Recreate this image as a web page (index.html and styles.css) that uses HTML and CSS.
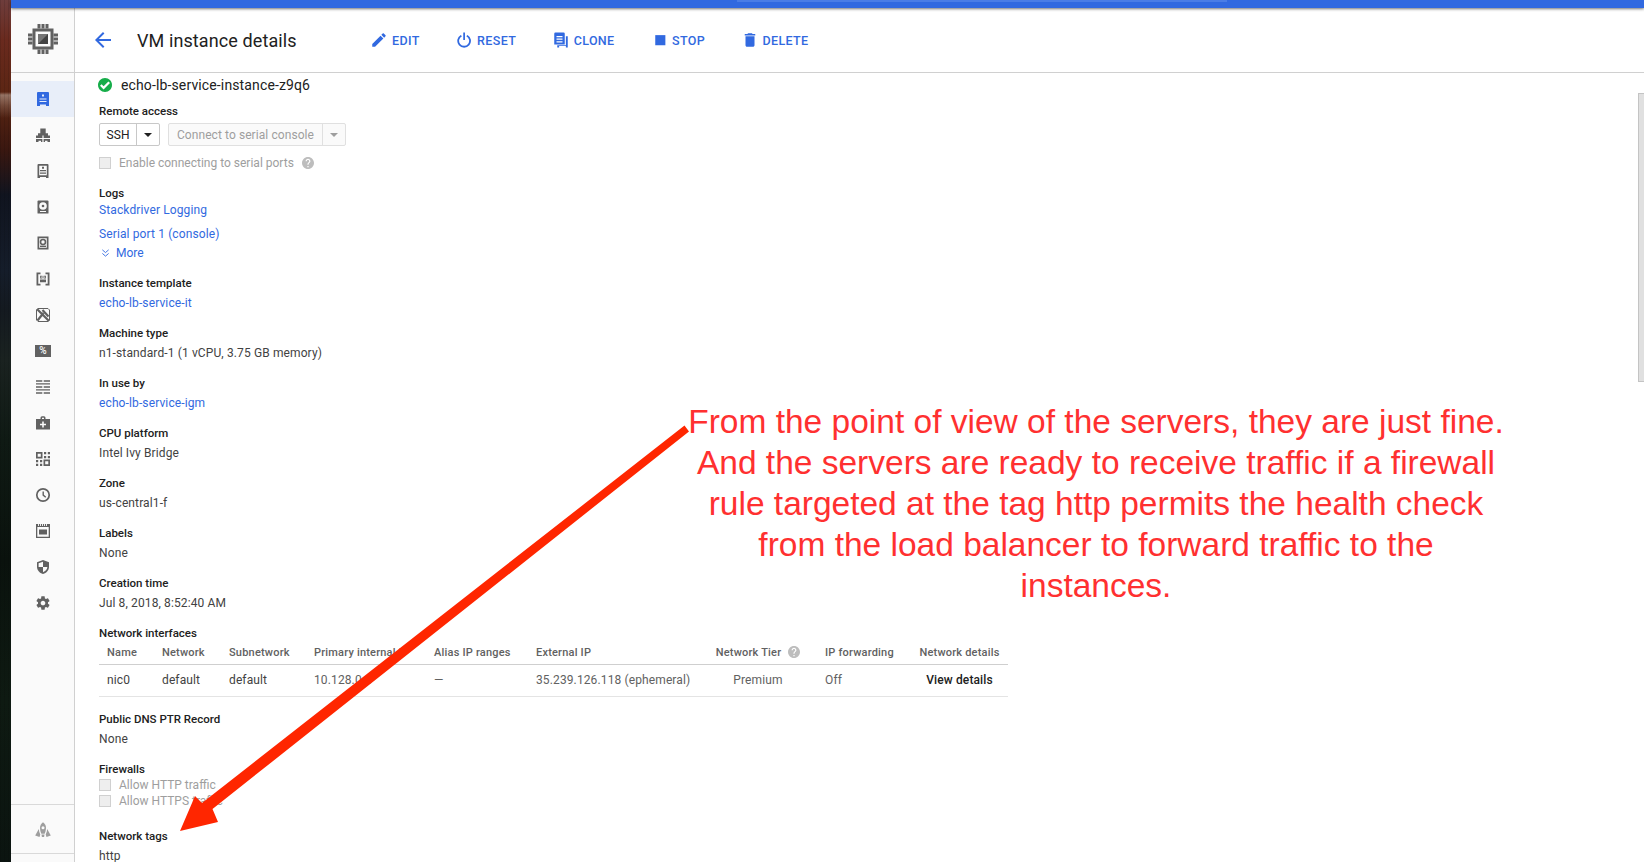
FILE: index.html
```html
<!DOCTYPE html>
<html lang="en">
<head>
<meta charset="utf-8">
<title>VM instance details</title>
<link rel="stylesheet" href="styles.css">
</head>
<body>
<div class="wallpaper"></div>
<div class="app">
  <div class="topbar"><div class="searchbox"></div></div>
  <div class="main">
    <aside class="sidebar">
      <div class="brand">
        <svg class="chip" viewBox="0 0 30 30"><path d="M6 6h18v18H6z" fill="none" stroke="#616161" stroke-width="3"/><path d="M10 10h10v10H10z" fill="#757575"/><path d="M20 10v10H10z" fill="#424242"/><path d="M9.500 0h3v4.500h-3zM13.500 0h3v4.500h-3zM17.500 0h3v4.500h-3zM9.500 25.500h3V30h-3zM13.500 25.500h3V30h-3zM17.500 25.500h3V30h-3zM0 9.500h4.500v3H0zM0 13.500h4.500v3H0zM0 17.500h4.500v3H0zM25.500 9.500H30v3h-4.500zM25.500 13.500H30v3h-4.500zM25.500 17.500H30v3h-4.500z" fill="#616161"/></svg>
      </div>
      <nav class="nav">
        <div class="nav-item active"><svg class="ico" viewBox="0 0 16 16"><path d="M3 1h10a1 1 0 0 1 1 1v13h-3v-1.500H5V15H2V2a1 1 0 0 1 1-1z" fill="#3169e0"/><path d="M7 3.500h2v2H7zM4.500 7.500h7v1h-7zM4.500 10h7v1h-7z" fill="#e8eef9"/></svg></div>
        <div class="nav-item"><svg class="ico" viewBox="0 0 16 16"><path d="M5.300 1.500h5.400v4.700h2.300v2.300h2V15h-2.500v-1.300H10V15H6v-1.300H3.500V15H1V8.500h2V6.200h2.300z" fill="#616161"/><path d="M7.400 8.500h1.200V15H7.400zM1 11h14v.9H1z" fill="#fafafa"/></svg></div>
        <div class="nav-item"><svg class="ico" viewBox="0 0 16 16"><path d="M3.500 1h9a1 1 0 0 1 1 1v13H11v-1H5v1H2.500V2a1 1 0 0 1 1-1zM4.200 2.700v9.600h7.600V2.700z" fill="#616161" fill-rule="evenodd"/><path d="M7 3.700h2v2H7zM5 7h6v1.300H5zM5 9.500h6v1.300H5z" fill="#616161"/></svg></div>
        <div class="nav-item"><svg class="ico" viewBox="0 0 16 16"><path d="M3.500 1.500h9a1 1 0 0 1 1 1V14a.500.500 0 0 1-.5.500H3a.500.500 0 0 1-.5-.500V2.500a1 1 0 0 1 1-1z" fill="#616161"/><circle cx="8" cy="7" r="3.800" fill="#fafafa"/><circle cx="8" cy="7" r="1.300" fill="#616161"/><path d="M5 12h6v1H5z" fill="#fafafa"/></svg></div>
        <div class="nav-item"><svg class="ico" viewBox="0 0 16 16"><path d="M2.500 1.500h11v13h-11zM4.200 3.200v9.600h7.600V3.200z" fill="#616161" fill-rule="evenodd"/><circle cx="8" cy="7" r="2.500" fill="none" stroke="#616161" stroke-width="1.600"/><path d="M5 10.600h6V12H5z" fill="#616161"/></svg></div>
        <div class="nav-item"><svg class="ico" viewBox="0 0 16 16"><path d="M1.500 1.500h4v1.800H3.300v9.400h2.200v1.800h-4zM14.500 1.500h-4v1.800h2.200v9.400h-2.200v1.800h4z" fill="#616161"/><path d="M5 4.800h2.500v2.700H5zM8.500 4.800H11v2.700H8.500zM5 8.500h6v2.700H5z" fill="#616161"/><path d="M5.800 5.600h.9v1.100h-.9zM9.300 5.600h.9v1.100h-.9z" fill="#fafafa"/></svg></div>
        <div class="nav-item"><svg class="ico" viewBox="0 0 16 16"><path d="M3 1.500h10L14.500 3v10L13 14.500H3L1.500 13V3z" fill="none" stroke="#616161" stroke-width="1"/><path d="M2 2l12 12M2.500 13.500L8.500 6M13.500 9.500L7.500 3" fill="none" stroke="#616161" stroke-width="2.200"/></svg></div>
        <div class="nav-item"><svg class="ico" viewBox="0 0 16 16"><path d="M0 2h16v12H0z" fill="#616161"/><text x="8" y="11.300" class="pct-text">%</text></svg></div>
        <div class="nav-item"><svg class="ico" viewBox="0 0 16 16"><path d="M1 1.200h6.300v1.600H1zM8.700 1.200H15v1.600H8.700zM1 7.200h6.300v1.600H1zM8.700 7.200H15v1.600H8.700zM1 13.200h6.300v1.600H1zM8.700 13.200H15v1.600H8.700z" fill="#616161"/><path d="M1 4.200h14v1.400H1zM1 10.200h14v1.400H1z" fill="#616161"/></svg></div>
        <div class="nav-item"><svg class="ico" viewBox="0 0 16 16"><path d="M5.500 4V2.800a1.500 1.500 0 0 1 1.500-1.500h2a1.500 1.500 0 0 1 1.500 1.500V4H15v10.500H1V4zM7 2.800V4h2V2.800z" fill="#616161" fill-rule="evenodd"/><path d="M7.200 6.500h1.600v2.200H11v1.600H8.800v2.200H7.200v-2.200H5v-1.600h2.200z" fill="#fafafa"/></svg></div>
        <div class="nav-item"><svg class="ico" viewBox="0 0 16 16"><path d="M1 1h6.500v6.500H1zM2.700 2.700v3.100h3.100V2.700zM8.500 8.500H15V15H8.500zM10.200 10.200v3.100h3.100v-3.100z" fill="#616161" fill-rule="evenodd"/><path d="M9 1h2.200v2.200H9zM12.800 1H15v2.200h-2.200zM12.800 5H15v2.200h-2.200zM9 5h2.200v2.200H9zM1 9h2.200v2.200H1zM5 9h2.200v2.200H5zM1 12.800h2.200V15H1zM5 12.800h2.200V15H5z" fill="#616161"/></svg></div>
        <div class="nav-item"><svg class="ico" viewBox="0 0 16 16"><circle cx="8" cy="8" r="6.200" fill="none" stroke="#616161" stroke-width="1.700"/><path d="M7.500 4.500h1.400v3.300l2.300 2-.9 1L7.500 8.500z" fill="#616161"/></svg></div>
        <div class="nav-item"><svg class="ico" viewBox="0 0 16 16"><path d="M1 1h14v14H1zM2.300 4v9.700h11.400V4z" fill="#616161" fill-rule="evenodd"/><path d="M4 6.500h8v5H4z" fill="#616161"/><path d="M3.500 1v2M5.500 1v2M7.500 1v2M9.500 1v2M11.500 1v2" stroke="#fafafa" stroke-width=".9"/></svg></div>
        <div class="nav-item"><svg class="ico" viewBox="0 0 16 16"><path d="M8 1l6 2.200v4.500c0 3.500-2.500 6.200-6 7.300-3.500-1.100-6-3.800-6-7.300V3.200z" fill="#616161"/><path d="M8 2.800V8H3.600V4.300zM8 8h4.400c-.3 2.400-2 4.300-4.400 5.200z" fill="#fafafa"/></svg></div>
        <div class="nav-item"><svg class="ico" viewBox="0 0 24 24"><path d="M19.430 12.980c.04-.32.07-.64.07-.98s-.03-.66-.07-.98l2.110-1.650c.19-.15.24-.42.12-.64l-2-3.460c-.12-.22-.39-.3-.61-.22l-2.490 1c-.52-.4-1.080-.73-1.690-.98l-.38-2.650C14.460 2.180 14.250 2 14 2h-4c-.25 0-.46.18-.49.42l-.38 2.650c-.61.25-1.170.59-1.690.98l-2.490-1c-.23-.09-.49 0-.61.22l-2 3.460c-.13.22-.07.49.12.64l2.110 1.650c-.04.32-.07.65-.07.98s.03.66.07.98l-2.110 1.650c-.19.15-.24.42-.12.64l2 3.460c.12.22.39.3.61.22l2.490-1c.52.4 1.080.73 1.690.98l.38 2.650c.03.24.24.42.49.42h4c.25 0 .46-.18.49-.42l.38-2.650c.61-.25 1.170-.59 1.690-.98l2.490 1c.23.09.49 0 .61-.22l2-3.460c.12-.22.07-.49-.12-.64l-2.110-1.650zM12 15.500c-1.930 0-3.500-1.570-3.500-3.500s1.570-3.500 3.500-3.500 3.500 1.570 3.500 3.500-1.570 3.500-3.500 3.500z" fill="#616161"/></svg></div>
      </nav>
      <div class="side-foot"><svg class="ico" viewBox="0 0 16 16"><path d="M8 .3c2 1.400 3 3.500 3 5.800 0 2-.5 3.900-1.300 5.700H6.300C5.500 10 5 8.100 5 6.100 5 3.800 6 1.700 8 .3z" fill="#9e9e9e"/><circle cx="8" cy="5.800" r="1.500" fill="#fafafa"/><path d="M3.800 7c.1 2 .6 3.800 1.500 5.400L4.500 15 .2 13.500zM12.200 7c-.1 2-.6 3.800-1.500 5.400l.8 2.600 4.300-1.500zM6.500 12.500h3l-.4 2.500H6.900z" fill="#9e9e9e"/></svg></div>
    </aside>
    <section class="content">
      <header class="header">
        <svg class="back" viewBox="0 0 24 24"><path d="M20 11H7.830l5.590-5.590L12 4l-8 8 8 8 1.410-1.410L7.830 13H20v-2z"/></svg>
        <h1 class="title">VM instance details</h1>
        <div class="actions">
          <span class="action"><svg viewBox="0 0 24 24"><path d="M3 17.250V21h3.750L17.810 9.940l-3.750-3.750L3 17.250zM20.710 7.040c.39-.39.39-1.020 0-1.410l-2.340-2.340c-.39-.39-1.020-.39-1.410 0l-1.830 1.830 3.750 3.750 1.830-1.830z"/></svg>EDIT</span>
          <span class="action"><svg viewBox="0 0 24 24"><path d="M11 2h2.300v10H11zM7.700 5.200l1.500 1.900a6.700 6.700 0 1 0 5.900 0l1.500-1.900a9.100 9.100 0 1 1-8.900 0z"/></svg>RESET</span>
          <span class="action"><svg viewBox="0 0 24 24"><path d="M4.500 2h11A1.500 1.500 0 0 1 17 3.500V18H3V3.500A1.500 1.500 0 0 1 4.500 2zM6 6.500v1.700h8V6.500zM6 10v1.700h8V10zM6 13.500v1.700h8v-1.700z" fill-rule="evenodd"/><path d="M18.500 7H21v15h-2.500v-2h-9v2H7v-3h11.500z"/></svg>CLONE</span>
          <span class="action"><svg viewBox="0 0 24 24"><path d="M7 5.500h13.500V19H7z"/></svg>STOP</span>
          <span class="action"><svg viewBox="0 0 24 24"><path d="M6 19c0 1.100.9 2 2 2h8c1.100 0 2-.9 2-2V7H6v12zM19 4h-3.500l-1-1h-5l-1 1H5v2h14V4z"/></svg>DELETE</span>
        </div>
      </header>
      <div class="body">
        <div class="name-row">
          <svg class="ok" viewBox="2 2 20 20"><path d="M12 2C6.480 2 2 6.480 2 12s4.480 10 10 10 10-4.480 10-10S17.520 2 12 2z" fill="#16ad4a"/><path d="M6 12l4 4 8-8" fill="none" stroke="#fff" stroke-width="3.200"/></svg>
          <span>echo-lb-service-instance-z9q6</span>
        </div>
        <div class="label">Remote access</div>
        <div class="remote">
          <div class="split"><span class="split-main ssh">SSH</span><span class="split-caret"><i class="caret"></i></span></div>
          <div class="split disabled"><span class="split-main serial">Connect to serial console</span><span class="split-caret"><i class="caret"></i></span></div>
        </div>
        <div class="check-row enable"><i class="box"></i><span>Enable connecting to serial ports</span><svg class="help" viewBox="2 2 20 20"><path d="M12 2C6.480 2 2 6.480 2 12s4.480 10 10 10 10-4.480 10-10S17.520 2 12 2zm1 17h-2v-2h2v2zm2.070-7.750l-.9.920C13.450 12.900 13 13.500 13 15h-2v-.5c0-1.100.45-2.100 1.170-2.830l1.240-1.260c.37-.36.59-.86.59-1.410 0-1.100-.9-2-2-2s-2 .9-2 2H8c0-2.210 1.790-4 4-4s4 1.790 4 4c0 .88-.36 1.680-.93 2.250z"/></svg></div>
        <div class="section logs">
          <div class="label">Logs</div>
          <a class="value link tight">Stackdriver Logging</a>
          <a class="value link serial-link">Serial port 1 (console)</a>
          <a class="value link more"><svg class="chev" viewBox="0 0 10 10"><path d="M1.500 1.500L5 4.500l3.500-3M1.500 5.500L5 8.500l3.500-3" fill="none" stroke="#3169e0" stroke-width="1"/></svg>More</a>
        </div>
        <div class="section"><div class="label">Instance template</div><a class="value link">echo-lb-service-it</a></div>
        <div class="section"><div class="label">Machine type</div><div class="value">n1-standard-1 (1 vCPU, 3.75 GB memory)</div></div>
        <div class="section"><div class="label">In use by</div><a class="value link">echo-lb-service-igm</a></div>
        <div class="section"><div class="label">CPU platform</div><div class="value">Intel Ivy Bridge</div></div>
        <div class="section"><div class="label">Zone</div><div class="value">us-central1-f</div></div>
        <div class="section"><div class="label">Labels</div><div class="value">None</div></div>
        <div class="section"><div class="label">Creation time</div><div class="value">Jul 8, 2018, 8:52:40 AM</div></div>
        <div class="label">Network interfaces</div>
        <table class="nics">
          <colgroup><col class="c1"><col class="c2"><col class="c3"><col class="c4"><col class="c5"><col class="c6"><col class="c7"><col class="c8"><col class="c9"></colgroup>
          <thead><tr><th>Name</th><th>Network</th><th>Subnetwork</th><th>Primary internal IP</th><th>Alias IP ranges</th><th>External IP</th><th class="center">Network Tier<svg class="help small" viewBox="2 2 20 20"><path d="M12 2C6.480 2 2 6.480 2 12s4.480 10 10 10 10-4.480 10-10S17.520 2 12 2zm1 17h-2v-2h2v2zm2.070-7.750l-.9.920C13.450 12.900 13 13.500 13 15h-2v-.5c0-1.100.45-2.100 1.170-2.830l1.240-1.260c.37-.36.59-.86.59-1.410 0-1.100-.9-2-2-2s-2 .9-2 2H8c0-2.210 1.790-4 4-4s4 1.790 4 4c0 .88-.36 1.680-.93 2.250z"/></svg></th><th class="fwd">IP forwarding</th><th class="center">Network details</th></tr></thead>
          <tbody><tr><td class="dark">nic0</td><td class="dark">default</td><td class="dark">default</td><td>10.128.0.5</td><td>—</td><td>35.239.126.118 (ephemeral)</td><td class="center">Premium</td><td class="fwd">Off</td><td class="center view">View details</td></tr></tbody>
        </table>
        <div class="section"><div class="label">Public DNS PTR Record</div><div class="value">None</div></div>
        <div class="section firewalls">
          <div class="label">Firewalls</div>
          <div class="check-row small-row"><i class="box"></i><span>Allow HTTP traffic</span></div>
          <div class="check-row small-row"><i class="box"></i><span>Allow HTTPS traffic</span></div>
        </div>
        <div class="section"><div class="label">Network tags</div><div class="value">http</div></div>
      </div>
      <div class="scrollbar"></div>
    </section>
  </div>
</div>
<svg class="arrow" viewBox="0 0 1644 862"><path d="M684.500 425.500L689 431.500 212.500 809 218 822 180 831 195 796 202 803z"/></svg>
<p class="note">From the point of view of the servers, they are just fine.<br>And the servers are ready to receive traffic if a firewall<br>rule targeted at the tag http permits the health check<br>from the load balancer to forward traffic to the<br>instances.</p>
</body>
</html>
```
FILE: styles.css
```css
* { box-sizing: border-box; }
html, body { margin: 0; height: 862px; overflow: hidden; }
body { display: flex; background: #fff; font-family: Roboto, "Liberation Sans", sans-serif; color: #212121; position: relative; }

.wallpaper {
  width: 11px; flex: none;
  background:
    repeating-linear-gradient(90deg, rgba(0,0,0,.1) 0 1px, transparent 1px 4px),
    linear-gradient(180deg, transparent 92px, rgba(220,210,200,.45) 95px, rgba(220,210,200,.2) 106px, transparent 118px),
    linear-gradient(180deg, #6e3d3c 0, #6a2a1e 40px, #5a2512 100px, #3a1710 150px, #10141f 195px, #151d2a 270px, #141a20 310px, #1a2220 360px, #0f1a14 440px, #0a120d 560px, #0e1a12 700px, #0b1410 862px);
}
.app { flex: 1; display: flex; flex-direction: column; min-width: 0; height: 862px; }
.topbar { height: 8px; flex: none; background: #3169e0; box-shadow: 0 1px 3px rgba(0,0,0,.55); position: relative; z-index: 2; }
.searchbox { width: 490px; height: 2px; margin-left: 726px; background: #4a7de6; }
.main { flex: 1; display: flex; min-height: 0; }

.sidebar { width: 64px; flex: none; background: #fafafa; border-right: 1px solid #d0d0d0; display: flex; flex-direction: column; }
.brand { height: 65px; flex: none; border-bottom: 1px solid #d0d0d0; display: flex; align-items: center; justify-content: center; padding-bottom: 2px; }
.chip { width: 30px; height: 30px; }
.nav { padding-top: 8px; }
.nav-item { height: 36px; display: flex; align-items: center; justify-content: center; }
.nav-item.active { background: #e8eef9; }
.ico { width: 16px; height: 16px; display: block; }
.pct-text { font: 500 10px Roboto, sans-serif; fill: #fafafa; text-anchor: middle; }
.side-foot { margin-top: auto; height: 50px; margin-bottom: 8px; padding-top: 2px; border-top: 1px solid #d9d9d9; border-bottom: 1px solid #d9d9d9; display: flex; align-items: center; justify-content: center; }

.content { flex: 1; min-width: 0; display: flex; flex-direction: column; position: relative; }
.header { height: 65px; flex: none; border-bottom: 1px solid #d0d0d0; display: flex; align-items: center; padding-left: 16px; }
.back { width: 24px; height: 24px; fill: #3169e0; flex: none; }
.title { margin: 0 0 0 22px; width: 233px; flex: none; font-size: 18px; font-weight: 400; color: #212121; letter-spacing: .1px; }
.actions { display: flex; gap: 35.500px; }
.action { display: flex; align-items: center; gap: 4px; font-size: 12.500px; font-weight: 500; color: #3169e0; letter-spacing: .35px; }
.action svg { width: 18px; height: 18px; fill: #3169e0; }

.body { flex: 1; min-height: 0; overflow: hidden; padding: 2px 0 0 24px; }
.name-row { height: 20px; display: flex; align-items: center; gap: 9px; font-size: 14px; letter-spacing: .13px; margin-bottom: 6px; color: #212121; }
.ok { width: 14px; height: 14px; margin-left: -1px; }
.label { font-size: 11.500px; font-weight: 500; line-height: 20px; height: 20px; color: #212121; white-space: nowrap; }
.value { display: block; font-size: 12px; letter-spacing: .12px; line-height: 20px; height: 20px; color: #424242; white-space: nowrap; }
.link { color: #3169e0; }
.section { margin-bottom: 10px; }

.remote { display: flex; gap: 8px; margin-top: 2px; height: 23px; }
.split { display: flex; height: 23px; border: 1px solid #c8c8c8; border-radius: 2px; font-size: 12px; letter-spacing: .08px; color: #212121; }
.split-main { width: 38px; display: flex; align-items: center; justify-content: center; border-right: 1px solid #c8c8c8; }
.split-main.ssh { width: 37px; }
.split-caret { width: 22px; display: flex; align-items: center; justify-content: center; }
.caret { width: 0; height: 0; border: 4px solid transparent; border-top-color: #212121; border-bottom: 0; }
.split.disabled { border-color: #e0e0e0; background: #fafafa; color: #9e9e9e; }
.split.disabled .split-main { border-color: #e0e0e0; }
.split.disabled .caret { border-top-color: #9e9e9e; }
.split-main.serial { width: 154px; }

.check-row { display: flex; align-items: center; gap: 8px; font-size: 12px; color: #9e9e9e; }
.enable { height: 20px; margin-top: 7px; margin-bottom: 10px; }
.box { width: 12px; height: 12px; background: #eee; border: 1px solid #d0d0d0; flex: none; }
.help { width: 12px; height: 12px; fill: #bdbdbd; }
.tight { margin-top: -3px; }
.serial-link { margin-top: 4px; }
.more { margin-top: -1px; display: flex; align-items: center; gap: 6px; padding-left: 2px; letter-spacing: 0; }
.chev { width: 9px; height: 10px; }
.logs { margin-bottom: 10px; }

.nics { width: 909px; table-layout: fixed; border-collapse: collapse; margin-bottom: 12px; font-size: 12px; letter-spacing: .12px; }
.c1 { width: 55px; } .c2 { width: 67px; } .c3 { width: 85px; } .c4 { width: 120px; } .c5 { width: 102px; } .c6 { width: 180px; } .c7 { width: 100px; } .c8 { width: 103px; } .c9 { width: 97px; }
.nics th { height: 21px; padding: 0 0 2px 8px; text-align: left; font-size: 11px; font-weight: 500; color: #616161; white-space: nowrap; border-bottom: 1px solid #cfcfcf; overflow: hidden; letter-spacing: .2px; }
.nics td { height: 32px; padding: 0 0 0 8px; color: #616161; white-space: nowrap; border-bottom: 1px solid #e4e4e4; }
.nics td.dark { color: #424242; }
.nics th.center { padding: 0 0 2px; text-align: center; }
.nics td.center { padding: 0; text-align: center; }
.nics .fwd { padding-left: 17px; }
.nics td.view { color: #212121; font-weight: 500; }
.help.small { margin-left: 7px; vertical-align: -2.500px; }

.firewalls { margin-bottom: 17px; }
.firewalls .label { margin-bottom: -2px; }
.small-row { height: 16px; }

.scrollbar { position: absolute; right: 0; top: 85px; width: 6px; height: 289px; background: #e0e0e0; border: 1px solid #c4c4c4; border-width: 1px 0 1px 1px; }

.arrow { position: absolute; left: 0; top: 0; width: 1644px; height: 862px; fill: #ff2600; pointer-events: none; }
.note { position: absolute; left: 646px; top: 401px; width: 900px; margin: 0; text-align: center; font-family: "Liberation Sans", Arial, sans-serif; font-size: 33.500px; line-height: 41px; color: #ff3030; }
```
